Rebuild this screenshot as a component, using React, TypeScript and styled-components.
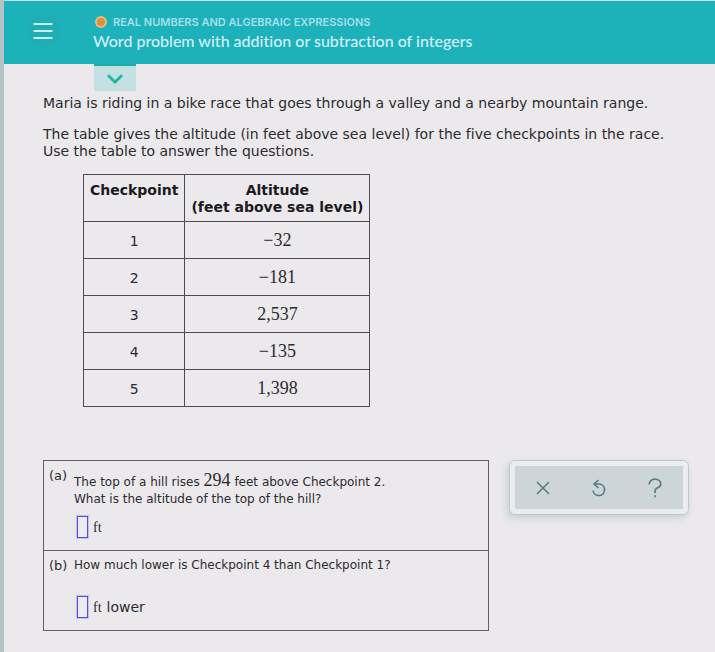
import React from "react";
import styled, { createGlobalStyle } from "styled-components";

const Global = createGlobalStyle`
  * { box-sizing: border-box; }
  body { margin: 0; background: #ebe9ec; }
  button, input { font: inherit; margin: 0; }
`;

const Page = styled.div`
  min-height: 100vh;
  border-left: 4px solid #b5c3c8;
  background: #ebe9ec;
  color: #2c2b2f;
  font: 14px/17px "DejaVu Sans", Verdana, sans-serif;
  font-variant-ligatures: none;
`;

const Header = styled.header`
  display: flex;
  align-items: flex-start;
  gap: 34px;
  height: 64px;
  padding: 14px 24px 0 23px;
  border-top: 1px solid #c9dde2;
  background: #1db2b9;
`;

const MenuButton = styled.button`
  display: grid;
  place-items: center;
  width: 32px;
  height: 32px;
  padding: 0;
  border: 0;
  border-radius: 50%;
  background: #20adb4;
  color: #c9eef4;
`;

const Titles = styled.div`
  font-family: Lato, sans-serif;
`;

const Topic = styled.div`
  display: flex;
  align-items: center;
  gap: 6px;
  padding-left: 2px;
  color: #a5dfec;
  font-family: Inter, sans-serif;
  font-size: 11px;
  font-weight: 600;
  line-height: 14px;
`;

const Dot = styled.span`
  width: 12px;
  height: 12px;
  border: 2px solid #e4bd86;
  border-radius: 50%;
  background: #df9035;
`;

const Title = styled.h1`
  margin: 3px 0 0;
  color: #d5effc;
  font-size: 16px;
  font-weight: 500;
  line-height: 18px;
`;

const Toggle = styled.button`
  display: grid;
  place-items: center;
  width: 42px;
  height: 27px;
  margin-left: 90px;
  padding: 0;
  border: 0;
  border-top: 2px solid #17aea8;
  background: #c3e1e2;
  color: #1cb8a0;
`;

const Main = styled.main`
  padding: 4px 24px 22px 39px;
`;

const Paragraph = styled.p`
  margin: 0 0 14px;
`;

const Table = styled.table`
  margin: 14px 0 0 40px;
  border-collapse: collapse;
  text-align: center;

  th, td { border: 1px solid #4e4c50; }
  th {
    height: 47px;
    padding: 7px 6px 5px;
    vertical-align: top;
    color: #1b1a1d;
  }
  td { height: 37px; padding: 2px 0 0; }
`;

const MathText = styled.span`
  font-family: "Liberation Serif", "Times New Roman", serif;
  font-size: 18px;
  line-height: 17px;
`;

const Work = styled.div`
  display: grid;
  grid-template-columns: minmax(0, 446px) 180px;
  align-items: start;
  gap: 20px;
  margin-top: 53px;
`;

const Questions = styled.section`
  border: 1px solid #626064;
  font-size: 12px;
  line-height: 17px;
`;

const Question = styled.div`
  display: grid;
  grid-template-columns: 25px 1fr;
  padding: 6px;
  padding-left: 5px;

  & + & { border-top: 1px solid #626064; }
`;

const Mark = styled.span`
  font-size: 13px;
`;

const Prompt = styled.p<{ $top?: number }>`
  margin: 0;
  padding-top: ${(p) => p.$top ?? 0}px;
`;

const Answer = styled.label<{ $gap: number }>`
  display: flex;
  align-items: center;
  gap: 5px;
  margin: ${(p) => p.$gap}px 0 6px 3px;
  font-size: 14px;
`;

const Box = styled.input`
  width: 11px;
  height: 22px;
  padding: 0;
  border: 1px solid #5a49df;
  outline: 1px solid #c3bdf0;
  outline-offset: 0;
  background: #eceaf4;
`;

const Unit = styled.span`
  font-family: "Liberation Serif", "Times New Roman", serif;
  font-size: 14px;
`;

const Tools = styled.div`
  padding: 5px;
  border: 1px solid #b9cbcd;
  border-radius: 6px;
  background: #ebecef;
  box-shadow: -2px 3px 7px #c3cfd0;
`;

const ToolRow = styled.div`
  display: grid;
  grid-template-columns: repeat(3, 1fr);
  height: 43px;
  background: #ced5d8;
`;

const ToolButton = styled.button`
  display: grid;
  place-items: center;
  padding: 0;
  border: 0;
  background: none;
  color: #587a80;
`;

const rows = ["−32", "−181", "2,537", "−135", "1,398"];

export default function App() {
  return (
    <>
      <Global />
      <Page>
        <Header>
          <MenuButton aria-label="Menu">
            <svg width="20" height="16" viewBox="0 0 20 16" stroke="currentColor" strokeWidth="2">
              <path d="M0.5 1h19M0.5 8h19M0.5 15h19" />
            </svg>
          </MenuButton>
          <Titles>
            <Topic><Dot />REAL NUMBERS AND ALGEBRAIC EXPRESSIONS</Topic>
            <Title>Word problem with addition or subtraction of integers</Title>
          </Titles>
        </Header>
        <Toggle aria-label="Expand">
          <svg width="16" height="10" viewBox="0 0 16 10" fill="none" stroke="currentColor" strokeWidth="2.8">
            <path d="M1 1.2L8 8L15 1.2" />
          </svg>
        </Toggle>
        <Main>
          <Paragraph>Maria is riding in a bike race that goes through a valley and a nearby mountain range.</Paragraph>
          <Paragraph>
            The table gives the altitude (in feet above sea level) for the five checkpoints in the race.
            <br />
            Use the table to answer the questions.
          </Paragraph>
          <Table>
            <thead>
              <tr>
                <th scope="col">Checkpoint</th>
                <th scope="col">Altitude<br />(feet above sea level)</th>
              </tr>
            </thead>
            <tbody>
              {rows.map((value, i) => (
                <tr key={value}>
                  <td>{i + 1}</td>
                  <td><MathText>{value}</MathText></td>
                </tr>
              ))}
            </tbody>
          </Table>
          <Work>
            <Questions>
              <Question>
                <Mark>(a)</Mark>
                <div>
                  <Prompt $top={5}>
                    The top of a hill rises <MathText>294</MathText> feet above Checkpoint 2.
                    <br />
                    What is the altitude of the top of the hill?
                  </Prompt>
                  <Answer $gap={8}>
                    <Box aria-label="Altitude in feet" />
                    <Unit>ft</Unit>
                  </Answer>
                </div>
              </Question>
              <Question>
                <Mark>(b)</Mark>
                <div>
                  <Prompt>How much lower is Checkpoint 4 than Checkpoint 1?</Prompt>
                  <Answer $gap={22}>
                    <Box aria-label="Feet lower" />
                    <Unit>ft</Unit>
                    <span>lower</span>
                  </Answer>
                </div>
              </Question>
            </Questions>
            <Tools>
              <ToolRow>
                <ToolButton aria-label="Clear">
                  <svg width="14" height="14" viewBox="0 0 14 14" stroke="currentColor" strokeWidth="1.5">
                    <path d="M1 1l12 12M13 1L1 13" />
                  </svg>
                </ToolButton>
                <ToolButton aria-label="Undo">
                  <svg width="16" height="18" viewBox="0 0 16 18" fill="none" stroke="currentColor" strokeWidth="1.6">
                    <path d="M7.5 1L3 5L7.5 9M3 5H8.5A5.8 5.8 0 1 1 2 11.5" />
                  </svg>
                </ToolButton>
                <ToolButton aria-label="Help">
                  <svg width="14" height="20" viewBox="0 0 14 20" fill="none" stroke="currentColor" strokeWidth="1.7">
                    <path d="M1.2 6.5C1.2 3.2 3.6 1.2 7 1.2S12.8 3.2 12.8 6S10.5 9.3 8.8 10.2C7.4 11 7 11.8 7 13.4V15M7 17.2V19.2" />
                  </svg>
                </ToolButton>
              </ToolRow>
            </Tools>
          </Work>
        </Main>
      </Page>
    </>
  );
}
